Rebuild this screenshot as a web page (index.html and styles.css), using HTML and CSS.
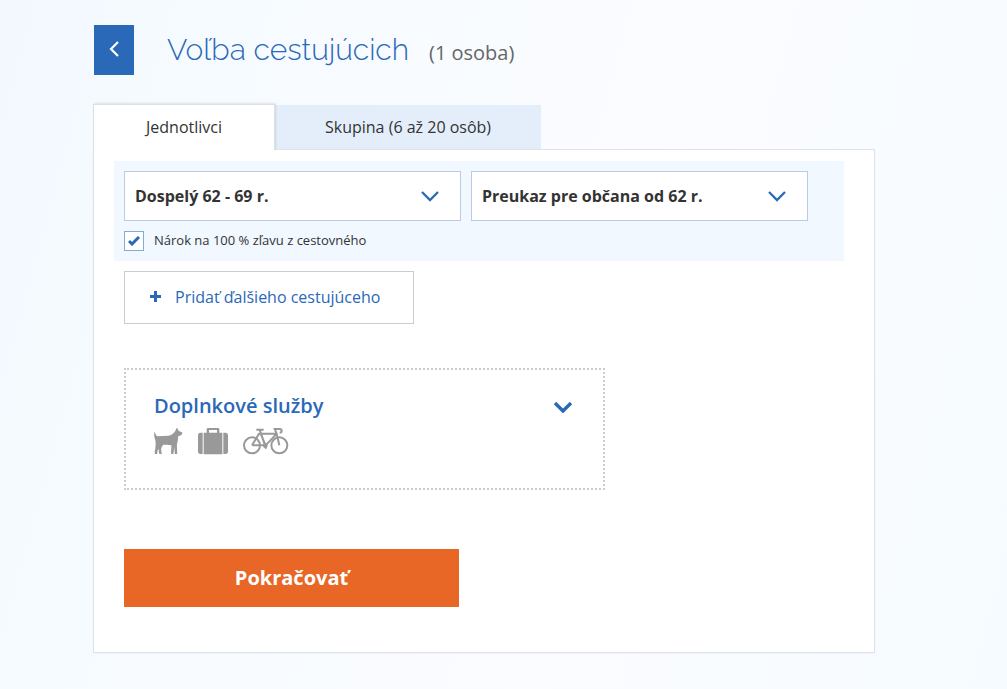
FILE: index.html
```html
<!DOCTYPE html>
<html lang="sk">
<head>
    <meta charset="UTF-8">
    <meta name="viewport" content="width=device-width, initial-scale=1.0">
    <title>Voľba cestujúcich</title>
    <link rel="stylesheet" href="styles.css">
</head>
<body>
<main class="page">
    <header class="header">
        <button type="button" class="back" aria-label="Späť">
            <svg width="12" height="18" viewBox="0 0 12 18"><path d="M10 1L3 8l7 7" fill="none" stroke="#fff" stroke-width="2.2"/></svg>
        </button>
        <h1>Voľba cestujúcich</h1>
        <span class="count">(1 osoba)</span>
    </header>

    <div class="tabs">
        <button type="button" class="tab active">Jednotlivci</button>
        <button type="button" class="tab">Skupina (6 až 20 osôb)</button>
    </div>

    <form class="panel">
        <div class="passenger">
            <div class="selects">
                <div class="select">
                    <select aria-label="Vek cestujúceho">
                        <option>Dospelý 62 - 69 r.</option>
                    </select>
                    <svg class="arrow" width="20" height="12" viewBox="0 0 20 12"><path d="M2 1l8 8 8-8" fill="none" stroke="#2a69b8" stroke-width="2.3"/></svg>
                </div>
                <div class="select">
                    <select aria-label="Preukaz">
                        <option>Preukaz pre občana od 62 r.</option>
                    </select>
                    <svg class="arrow" width="20" height="12" viewBox="0 0 20 12"><path d="M2 1l8 8 8-8" fill="none" stroke="#2a69b8" stroke-width="2.3"/></svg>
                </div>
            </div>
            <div class="check">
                <span class="box">
                    <input type="checkbox" id="discount" checked>
                    <svg class="tick" width="12" height="10" viewBox="0 0 12 10"><path d="M1 5l3 3 7-7" fill="none" stroke="#2a69b8" stroke-width="3"/></svg>
                </span>
                <label for="discount">Nárok na 100 % zľavu z cestovného</label>
            </div>
        </div>

        <button type="button" class="add">
            <svg width="11" height="11" viewBox="0 0 11 11"><path d="M5.5 0v11M0 5.5h11" stroke="#2a69b8" stroke-width="3"/></svg>
            Pridať ďalšieho cestujúceho
        </button>

        <section class="services">
            <div class="services-head">
                <h2>Doplnkové služby</h2>
                <button type="button" class="toggle" aria-label="Zobraziť služby">
                    <svg width="20" height="13" viewBox="0 0 20 13"><path d="M2 3l8 8 8-8" fill="none" stroke="#2a69b8" stroke-width="3.4"/></svg>
                </button>
            </div>
            <div class="icons">
                <!-- pes -->
                <svg width="29" height="28" viewBox="0 0 90 84"><path d="M1 12C4 18 5 24 10 27L44 26C54 25 61 18 66 11L71 0L77 11L88 16C88 23 83 27 75 27C74 38 74 44 71 52L72 82H65L64 78L63 60L60 82H53L53 77L54 55C45 53 37 53 29 54C25 58 23 63 22 68L24 82H17L15 78L15 66L11 72L10 82H3L2 76L4 66C5 57 6 50 4 39C1 32 0 24 1 12Z" fill="#999"/></svg>
                <!-- batožina -->
                <svg width="30" height="27" viewBox="0 0 90 81"><path d="M8 14h6v64H8q-8 0-8-8V22q0-8 8-8zM76 14h6q8 0 8 8v48q0 8-8 8h-6zM17 14h9V4q0-4 4-4h30q4 0 4 4v10h9v65H17zM33 6v8h24V6z" fill="#999" fill-rule="evenodd"/></svg>
                <!-- bicykel -->
                <svg width="46" height="27" viewBox="0 0 138 81"><g fill="none" stroke="#999" stroke-width="6"><circle cx="27" cy="52" r="24"/><circle cx="109" cy="52" r="24"/><path d="M27 52L48 17H101L109 52M40 5h22M50 5L66 52H27M54 20l14 32 33-35-6-14h15q6 0 6 6 0 5-6 5M66 52l3 10"/><circle cx="67" cy="53" r="4"/></g></svg>
            </div>
        </section>

        <button type="submit" class="submit">Pokračovať</button>
    </form>
</main>
</body>
</html>
```

FILE: styles.css
```css
* {
    box-sizing: border-box;
}
body {
    margin: 0;
    min-height: 100vh;
    font-family: "Open Sans", sans-serif;
    font-size: 16px;
    color: #333;
    background: linear-gradient(105deg, #f3f8ff 0%, #f6fbff 20%, #fbfcff 60%, #f5fbff 100%);
}
button, select {
    font: inherit;
    color: inherit;
    margin: 0;
    border: 0;
    border-radius: 0;
    cursor: pointer;
}
svg {
    display: block;
}
.page {
    padding: 25px 132px 36px 93px;
}
.header {
    display: flex;
    align-items: center;
    height: 50px;
    margin: 0 0 29px 1px;
}
.back {
    display: flex;
    align-items: center;
    justify-content: center;
    width: 40px;
    height: 50px;
    padding: 0;
    background: #2a69b8;
}
h1 {
    margin: 0 20px 0 33px;
    font-family: Raleway, Lato, sans-serif;
    font-size: 30px;
    font-weight: 300;
    line-height: 50px;
    color: #2a69b8;
}
.count {
    padding-top: 4px;
    font-size: 20px;
    color: #666;
}
.tabs {
    display: flex;
    align-items: flex-end;
}
.tab {
    height: 44px;
    padding: 0 50px;
    background: #e4eefb;
}
.tab.active {
    position: relative;
    height: 46px;
    margin-bottom: -1px;
    padding: 0 52px 2px;
    font-weight: 500;
    background: #fff;
    border: 1px solid #dcdfe4;
    border-bottom: 0;
    box-shadow: 1px -1px 2px rgba(0, 0, 0, 0.1);
}
.panel {
    padding: 11px 30px 45px 20px;
    background: #fff;
    border: 1px solid #dfe2e8;
    box-shadow: 0 1px 2px rgba(0, 0, 0, 0.04);
}
.passenger {
    padding: 10px 36px 10px 10px;
    background: #f1f8ff;
}
.selects {
    display: grid;
    grid-template-columns: 1fr 1fr;
    gap: 10px;
}
.select {
    position: relative;
}
.select select {
    width: 100%;
    height: 50px;
    padding: 0 50px 0 10px;
    font-weight: 700;
    background: #fff;
    border: 1px solid #b9cbe6;
    appearance: none;
}
.arrow {
    position: absolute;
    top: 20px;
    right: 21px;
    pointer-events: none;
}
.check {
    display: flex;
    align-items: center;
    gap: 10px;
    height: 20px;
    margin-top: 10px;
    font-size: 13px;
}
.check label {
    padding-bottom: 2px;
}
.box {
    position: relative;
    height: 20px;
}
.box input {
    display: block;
    width: 20px;
    height: 20px;
    margin: 0;
    background: #fff;
    border: 1px solid #85a9da;
    appearance: none;
}
.tick {
    display: none;
    position: absolute;
    top: 5px;
    left: 4px;
    pointer-events: none;
}
.box input:checked + .tick {
    display: block;
}
.add {
    display: flex;
    align-items: center;
    gap: 14px;
    height: 53px;
    margin: 10px 0 0 10px;
    padding: 0 33px 2px 25px;
    color: #2a69b8;
    background: #fff;
    border: 1px solid #ccc;
}
.services {
    max-width: 481px;
    height: 122px;
    margin: 44px 0 0 10px;
    padding: 20px 28px;
    border: 2px dotted #ccc;
}
.services-head {
    display: flex;
    align-items: center;
    justify-content: space-between;
}
h2 {
    margin: 0;
    font-size: 20px;
    font-weight: 600;
    line-height: 32px;
    color: #2a69b8;
}
.toggle {
    padding: 0 2px;
    background: none;
}
.icons {
    display: flex;
    align-items: center;
    gap: 15px;
    margin-top: 5px;
}
.submit {
    display: block;
    width: 335px;
    height: 58px;
    margin: 59px 0 0 10px;
    padding: 0 0 2px;
    font-size: 20px;
    font-weight: 700;
    color: #fff;
    background: #e96726;
}
```
